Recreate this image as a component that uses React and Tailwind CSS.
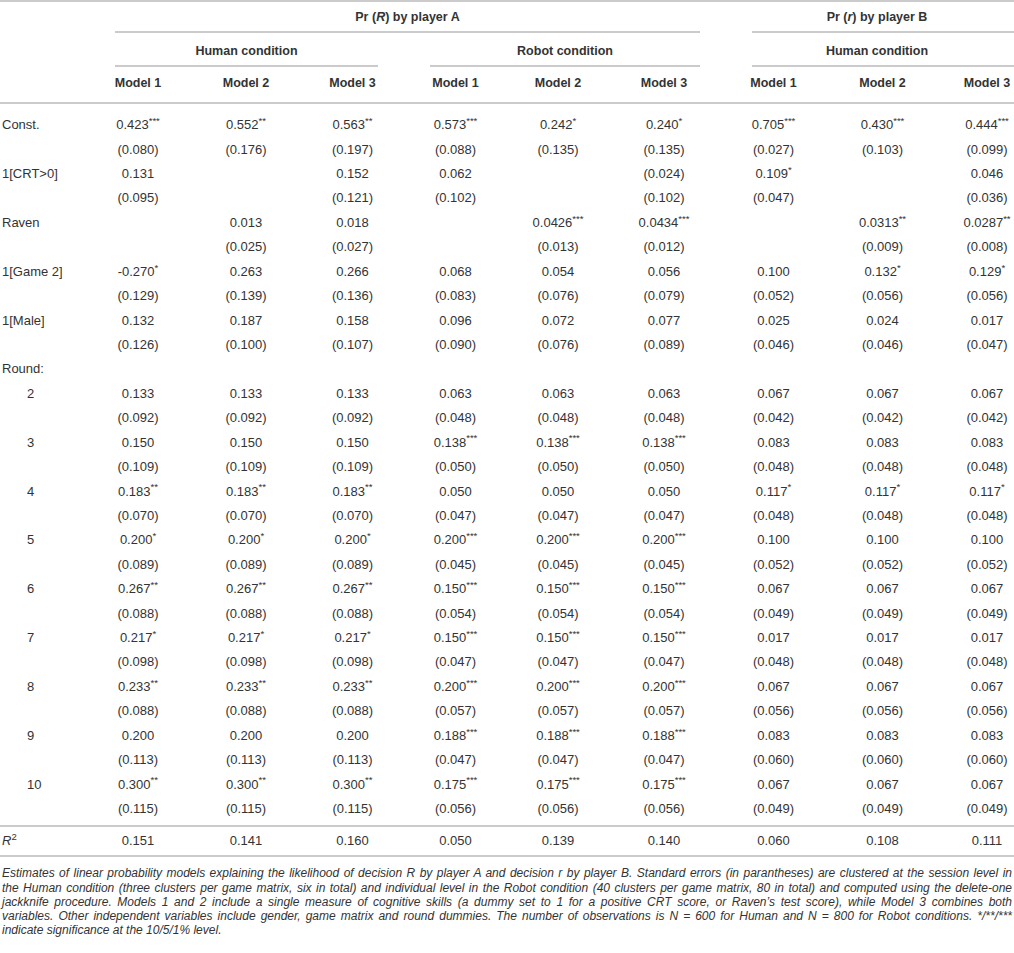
import React from 'react'

const GRID = 'grid grid-cols-[84px_108px_108px_105px_101px_104px_108px_111px_107px_78px]'

// every column after the label; the last one is pushed right so its centre sits at ~987px
const cellCls = (i) => (i === 8 ? 'text-center pl-[24px]' : 'text-center')

const Val = ({ v }) => {
  if (!v) return null
  const m = v.match(/^([^*]+)(\**)$/)
  return (
    <>
      {m[1]}
      {m[2] && <sup className="text-[9.5px] top-[-0.55em]">{m[2]}</sup>}
    </>
  )
}

const rep = (a, b, c) => [a, a, a, b, b, b, c, c, c]

const rows = [
  { label: 'Const.', vals: ['0.423***', '0.552**', '0.563**', '0.573***', '0.242*', '0.240*', '0.705***', '0.430***', '0.444***'] },
  { vals: ['(0.080)', '(0.176)', '(0.197)', '(0.088)', '(0.135)', '(0.135)', '(0.027)', '(0.103)', '(0.099)'] },
  { label: '1[CRT>0]', vals: ['0.131', '', '0.152', '0.062', '', '(0.024)', '0.109*', '', '0.046'] },
  { vals: ['(0.095)', '', '(0.121)', '(0.102)', '', '(0.102)', '(0.047)', '', '(0.036)'] },
  { label: 'Raven', vals: ['', '0.013', '0.018', '', '0.0426***', '0.0434***', '', '0.0313**', '0.0287**'] },
  { vals: ['', '(0.025)', '(0.027)', '', '(0.013)', '(0.012)', '', '(0.009)', '(0.008)'] },
  { label: '1[Game 2]', vals: ['-0.270*', '0.263', '0.266', '0.068', '0.054', '0.056', '0.100', '0.132*', '0.129*'] },
  { vals: ['(0.129)', '(0.139)', '(0.136)', '(0.083)', '(0.076)', '(0.079)', '(0.052)', '(0.056)', '(0.056)'] },
  { label: '1[Male]', vals: ['0.132', '0.187', '0.158', '0.096', '0.072', '0.077', '0.025', '0.024', '0.017'] },
  { vals: ['(0.126)', '(0.100)', '(0.107)', '(0.090)', '(0.076)', '(0.089)', '(0.046)', '(0.046)', '(0.047)'] },
  { label: 'Round:', vals: [] },
  { label: '2', indent: true, vals: rep('0.133', '0.063', '0.067') },
  { vals: rep('(0.092)', '(0.048)', '(0.042)') },
  { label: '3', indent: true, vals: rep('0.150', '0.138***', '0.083') },
  { vals: rep('(0.109)', '(0.050)', '(0.048)') },
  { label: '4', indent: true, vals: rep('0.183**', '0.050', '0.117*') },
  { vals: rep('(0.070)', '(0.047)', '(0.048)') },
  { label: '5', indent: true, vals: rep('0.200*', '0.200***', '0.100') },
  { vals: rep('(0.089)', '(0.045)', '(0.052)') },
  { label: '6', indent: true, vals: rep('0.267**', '0.150***', '0.067') },
  { vals: rep('(0.088)', '(0.054)', '(0.049)') },
  { label: '7', indent: true, vals: rep('0.217*', '0.150***', '0.017') },
  { vals: rep('(0.098)', '(0.047)', '(0.048)') },
  { label: '8', indent: true, vals: rep('0.233**', '0.200***', '0.067') },
  { vals: rep('(0.088)', '(0.057)', '(0.056)') },
  { label: '9', indent: true, vals: rep('0.200', '0.188***', '0.083') },
  { vals: rep('(0.113)', '(0.047)', '(0.060)') },
  { label: '10', indent: true, vals: rep('0.300**', '0.175***', '0.067') },
  { vals: rep('(0.115)', '(0.056)', '(0.049)') },
]

const r2 = ['0.151', '0.141', '0.160', '0.050', '0.139', '0.140', '0.060', '0.108', '0.111']

const notes = [
  <>Estimates of linear probability models explaining the likelihood of decision R by player A and decision r by player B. Standard errors (in parantheses) are clustered at the session level in</>,
  <>the Human condition (three clusters per game matrix, six in total) and individual level in the Robot condition (40 clusters per game matrix, 80 in total) and computed using the delete-one</>,
  <>jackknife procedure. Models 1 and 2 include a single measure of cognitive skills (a dummy set to 1 for a positive CRT score, or Raven’s test score), while Model 3 combines both</>,
  <>variables. Other independent variables include gender, game matrix and round dummies. The number of observations is N = 600 for Human and N = 800 for Robot conditions. */**/***</>,
]

export default function App() {
  const line = 'border-[#cbcbcb]'
  return (
    <div className="w-[1014px] overflow-hidden bg-white text-[#333] font-['Liberation_Sans',Arial,sans-serif]">
      <div className={`border-t-2 ${line}`} />

      {/* group header */}
      <div className={`${GRID} text-[12.5px] leading-[14px] font-bold`}>
        <div />
        <div className="col-span-6">
          <div className={`ml-[31px] mr-[18px] pt-[8px] pb-[7px] border-b-2 ${line} text-center`}>
            Pr (<i>R</i>) by player A
          </div>
        </div>
        <div className="col-span-3">
          <div className={`ml-[34px] pr-[12px] pt-[8px] pb-[7px] border-b-2 ${line} text-center`}>
            Pr (<i>r</i>) by player B
          </div>
        </div>
      </div>

      {/* condition header */}
      <div className={`${GRID} text-[12.5px] leading-[14px] font-bold`}>
        <div />
        <div className="col-span-3">
          <div className={`ml-[31px] mr-[27px] pt-[11px] pb-[7px] border-b-2 ${line} text-center`}>Human condition</div>
        </div>
        <div className="col-span-3">
          <div className={`ml-[25px] mr-[18px] pt-[11px] pb-[7px] border-b-2 ${line} text-center`}>Robot condition</div>
        </div>
        <div className="col-span-3">
          <div className={`ml-[34px] pr-[12px] pt-[11px] pb-[7px] border-b-2 ${line} text-center`}>Human condition</div>
        </div>
      </div>

      {/* model header */}
      <div className={`${GRID} text-[12.5px] leading-[14px] font-bold pt-[9px] pb-[12px] border-b-2 ${line}`}>
        <div />
        {Array.from({ length: 9 }, (_, i) => (
          <div key={i} className={cellCls(i)}>Model {(i % 3) + 1}</div>
        ))}
      </div>

      {/* body */}
      <div className={`pt-[9px] pb-[4px] border-b-2 ${line} text-[13px] leading-[16px]`}>
        {rows.map((r, ri) => (
          <div key={ri} className={`${GRID} h-[24.43px] items-center`}>
            <div className={r.indent ? 'pl-[27px]' : 'pl-[2px]'}>{r.label}</div>
            {Array.from({ length: 9 }, (_, i) => (
              <div key={i} className={cellCls(i)}>
                <Val v={r.vals[i]} />
              </div>
            ))}
          </div>
        ))}
      </div>

      {/* R squared */}
      <div className={`${GRID} h-[30px] items-center border-b-2 ${line} text-[13px] leading-[16px]`}>
        <div className="pl-[2px]">
          <i>R</i>
          <sup className="text-[9.5px]">2</sup>
        </div>
        {r2.map((v, i) => (
          <div key={i} className={cellCls(i)}>{v}</div>
        ))}
      </div>

      {/* note */}
      <div className="pt-[9px] pl-[2px] pr-[2px] text-[12px] leading-[14.3px] italic">
        {notes.map((n, i) => (
          <div key={i} className="text-justify [text-align-last:justify]">{n}</div>
        ))}
        <div>indicate significance at the 10/5/1% level.</div>
      </div>
    </div>
  )
}
